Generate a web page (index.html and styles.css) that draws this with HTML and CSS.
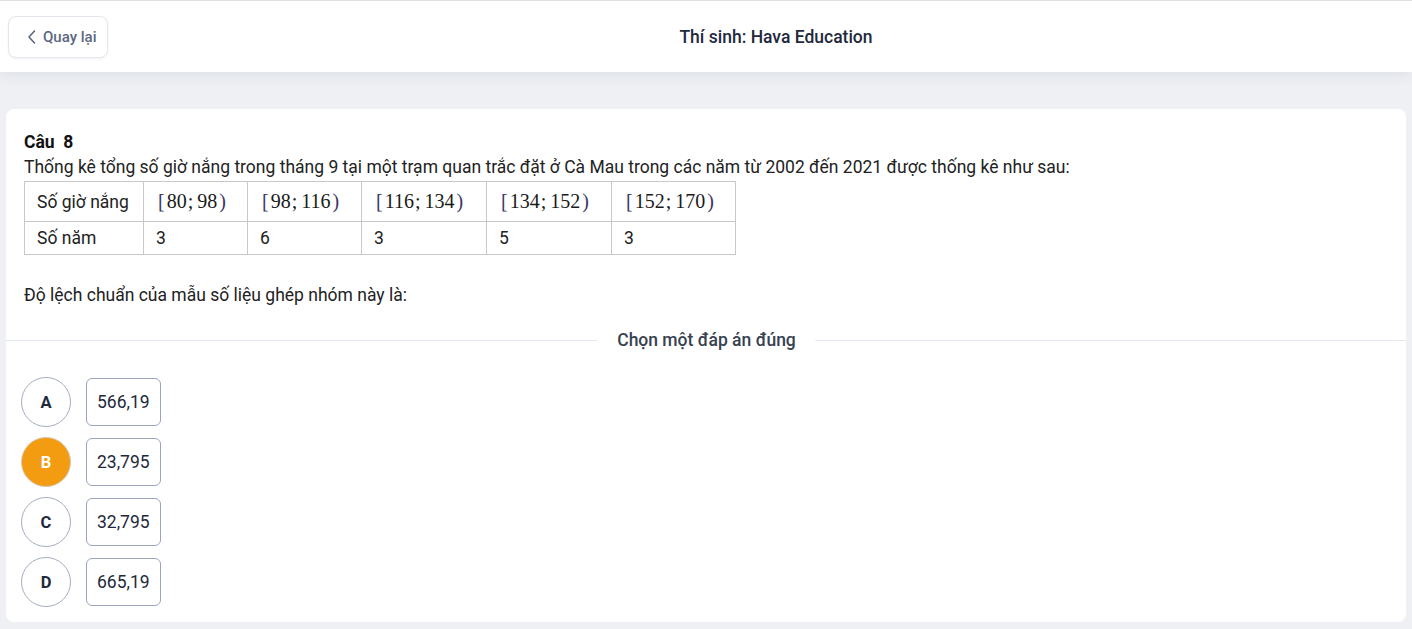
FILE: index.html
```html
<html>
  <head>
    <link rel="stylesheet" href="styles.css">
  </head>
  <body>
    <header class="topbar">
      <button class="back-btn">
        <svg class="back-icon" width="12" height="16" viewBox="0 0 12 16">
          <path d="M8.5 2 L3 8 L8.5 14" fill="none" stroke="#5b6780" stroke-width="1.6" stroke-linecap="round" stroke-linejoin="round" />
        </svg>
        Quay lại
      </button>
      <h1 class="candidate">Thí sinh: Hava Education</h1>
    </header>

    <main class="question">
      <section class="q-body">
        <div class="q-num">Câu&nbsp; 8</div>
        <p class="q-text">Thống kê tổng số giờ nắng trong tháng 9 tại một trạm quan trắc đặt ở Cà Mau trong các năm từ 2002 đến 2021 được thống kê như sau:</p>
        <table class="q-table">
          <tr class="head-row">
            <td class="c1">Số giờ nắng</td>
            <td class="c2"><span class="math"><span class="br">[</span>80<span class="semi">;</span>98<span class="br">)</span></span></td>
            <td class="c3"><span class="math"><span class="br">[</span>98<span class="semi">;</span>116<span class="br">)</span></span></td>
            <td class="c4"><span class="math"><span class="br">[</span>116<span class="semi">;</span>134<span class="br">)</span></span></td>
            <td class="c5"><span class="math"><span class="br">[</span>134<span class="semi">;</span>152<span class="br">)</span></span></td>
            <td class="c6"><span class="math"><span class="br">[</span>152<span class="semi">;</span>170<span class="br">)</span></span></td>
          </tr>
          <tr class="data-row">
            <td>Số năm</td>
            <td>3</td>
            <td>6</td>
            <td>3</td>
            <td>5</td>
            <td>3</td>
          </tr>
        </table>
        <p class="q-ask">Độ lệch chuẩn của mẫu số liệu ghép nhóm này là:</p>
      </section>

      <div class="divider">
        <span class="line"></span>
        <span class="divider-text">Chọn một đáp án đúng</span>
        <span class="line"></span>
      </div>

      <ul class="options">
        <li class="option"><span class="letter">A</span><span class="answer">566,19</span></li>
        <li class="option picked"><span class="letter">B</span><span class="answer">23,795</span></li>
        <li class="option"><span class="letter">C</span><span class="answer">32,795</span></li>
        <li class="option"><span class="letter">D</span><span class="answer">665,19</span></li>
      </ul>
    </main>
  </body>
</html>
```

FILE: styles.css
```css
html,
body,
ul,
p,
h1 {
  margin: 0;
  padding: 0;
}
html {
  font-family: Roboto, "Liberation Sans", sans-serif;
  background: #eef0f4;
  color: #222;
}
body {
  border-top: 1px solid #dcdfe4;
}
ul {
  list-style-type: none;
}

.topbar {
  display: flex;
  align-items: center;
  height: 71px;
  padding: 0 8px;
  background: #fff;
  box-shadow: 0 4px 12px rgba(30, 41, 59, 0.07);
}
.back-btn {
  display: flex;
  align-items: center;
  gap: 5px;
  width: 100px;
  height: 42px;
  padding: 0 0 0 17px;
  margin-top: 1px;
  border: 1px solid #e3e6ec;
  border-radius: 8px;
  background: #fff;
  box-shadow: 0 1px 3px rgba(0, 0, 0, 0.05);
  font-family: Roboto, sans-serif;
  font-size: 15px;
  font-weight: 500;
  color: #5b6780;
}
.candidate {
  flex: 1;
  text-align: center;
  font-size: 17.5px;
  font-weight: 500;
  color: #1e293b;
  margin-top: 1px;
  padding-left: 40px;
}

.question {
  margin: 37px 6px 0;
  padding: 21px 0 15px;
  background: #fff;
  border-radius: 8px;
}
.q-body {
  padding: 0 18px;
  font-size: 17.5px;
  line-height: 25px;
}
.q-num {
  font-weight: 700;
  font-size: 17.5px;
  color: #111;
}
.q-text {
  color: #222;
  margin-top: 0;
}
.q-table {
  border-collapse: collapse;
  margin-top: 1px;
  font-size: 17.5px;
}
.q-table td {
  border: 1px solid #c8c8c8;
  padding: 0 12px;
  color: #222;
}
.head-row td {
  height: 40px;
}
.data-row td {
  height: 33px;
}
.c1 { width: 94px; }
.c2 { width: 79px; }
.c3 { width: 89px; }
.c4 { width: 100px; }
.c5 { width: 100px; }
.c6 { width: 99px; }
.math {
  font-family: "Liberation Serif", "DejaVu Serif", serif;
  font-size: 20px;
  color: #1a1a1a;
}
.math .br {
  color: #3b3566;
  padding: 0 2px;
}
.math .semi {
  padding: 0 4px 0 1px;
}
.q-ask {
  margin-top: 28px;
}

.divider {
  display: flex;
  align-items: center;
  margin-top: 19px;
  height: 26px;
}
.divider .line {
  flex: 1;
  height: 1px;
  background: #e3e8f0;
}
.divider-text {
  padding: 0 19px 0 20px;
  font-size: 17.5px;
  font-weight: 500;
  color: #374151;
}

.options {
  display: flex;
  flex-direction: column;
  gap: 10px;
  padding: 24px 15px 0;
}
.option {
  display: flex;
  align-items: center;
  gap: 15px;
}
.letter {
  display: flex;
  align-items: center;
  justify-content: center;
  width: 48px;
  height: 48px;
  border: 1px solid #a3adbf;
  border-radius: 50%;
  font-size: 16.5px;
  font-weight: 700;
  color: #1e293b;
}
.picked .letter {
  background: #f39c12;
  border-color: #d3c7b0;
  color: #fff;
}
.answer {
  display: flex;
  align-items: center;
  height: 46px;
  padding: 0 10px;
  border: 1px solid #9aa6bc;
  border-radius: 6px;
  font-size: 17.5px;
  color: #1e293b;
}
```
